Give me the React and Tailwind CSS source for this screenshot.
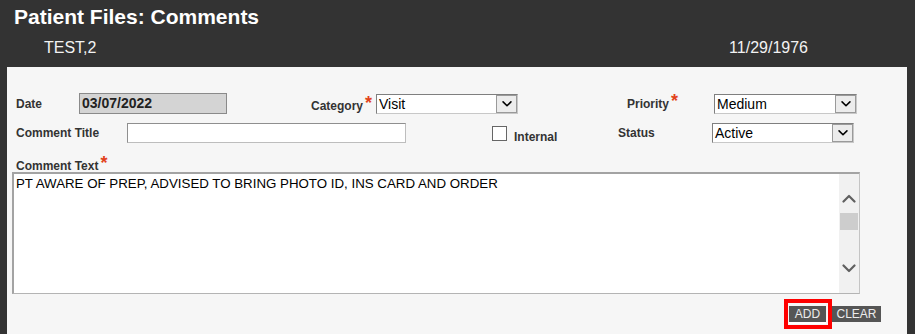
const Asterisk = () => <span className="text-[#e2421b] text-[18px] font-bold leading-[12px] relative top-[-1px] ml-[2px]">*</span>;

const Chevron = ({ up, className }) => (
    <svg viewBox="0 0 14 8" className={className} fill="none" stroke="currentColor" strokeWidth="2.2" strokeLinecap="round" strokeLinejoin="round">
        <path d={up ? 'M1.5 7 L7 1.5 L12.5 7' : 'M1.5 1 L7 6.5 L12.5 1'} />
    </svg>
);

const Select = ({ value, width }) => (
    <div className={`flex items-stretch h-[20px] bg-white border border-[#7f7f7f] border-r-[#c8c8c8] border-b-[#c8c8c8] ${width}`}>
        <span className="flex-1 pl-[2px] text-[14px] leading-[18px] text-black">{value}</span>
        <span className="w-[21px] flex items-center justify-center bg-[#ececec] border border-[#9a9a9a] text-black">
            <Chevron className="w-[10px] h-[6px]" />
        </span>
    </div>
);

const Label = ({ children, className = '' }) => (
    <span className={`text-[12px] font-bold text-[#333] leading-[14px] whitespace-nowrap ${className}`}>{children}</span>
);

const App = () => {
    return (
        <div className="min-h-screen bg-[#333333] font-['Liberation_Sans',Arial,sans-serif] overflow-hidden">
            {/* Header */}
            <div className="pl-[14px] pt-[5px] text-white text-[21px] font-bold leading-[24px]">Patient Files: Comments</div>
            <div className="flex justify-between pl-[44px] pr-[107px] mt-[10px] mb-[10px] text-[16px] leading-[18px] text-[#f2f2f2]">
                <span>TEST,2</span>
                <span>11/29/1976</span>
            </div>

            {/* Form panel */}
            <div className="ml-[7px] w-[900px] bg-[#f6f6f6] px-[5px] pt-[26px] pb-[20px]">
                <div className="flex items-center pl-[4px] h-[21px]">
                    <Label className="w-[63px]">Date</Label>
                    <div className="w-[148px] h-[21px] bg-[#d4d4d4] border border-[#8a8a8a] pl-[2px] text-[14px] font-bold leading-[19px] text-[#222]">03/07/2022</div>
                    <Label className="ml-[84px] w-[65px] pt-[3px]">Category<Asterisk /></Label>
                    <Select value="Visit" width="w-[142px]" />
                    <Label className="ml-[109px] w-[87px]">Priority<Asterisk /></Label>
                    <Select value="Medium" width="w-[143px]" />
                </div>

                <div className="flex items-center pl-[4px] mt-[9px] h-[20px]">
                    <Label className="w-[111px]">Comment Title</Label>
                    <div className="w-[279px] h-[20px] bg-white border border-[#8f8f8f] border-r-[#bdbdbd] border-b-[#bdbdbd]" />
                    <span className="ml-[86px] w-[15px] h-[15px] bg-white border border-[#666]" />
                    <Label className="ml-[7px] w-[104px] pt-[7px]">Internal</Label>
                    <Label className="w-[94px]">Status</Label>
                    <Select value="Active" width="w-[142px]" />
                </div>

                <div className="pl-[4px] mt-[10px] h-[19px]">
                    <Label>Comment Text<Asterisk /></Label>
                </div>

                <div className="flex w-[848px] h-[122px] bg-white border-2 border-[#a3a3a3] border-r border-b border-r-[#c4c4c4] border-b-[#b4b4b4]">
                    <div className="flex-1 pl-[2px] pt-[2px] text-[13.3px] leading-[16px] text-black">
                        PT AWARE OF PREP, ADVISED TO BRING PHOTO ID, INS CARD AND ORDER
                    </div>
                    <div className="w-[20px] bg-[#f1f1f1] flex flex-col items-center pt-[20px] pb-[20px] text-[#606060]">
                        <Chevron up className="w-[14px] h-[9px]" />
                        <div className="mt-[10px] w-[18px] h-[17px] bg-[#cdcdcd]" />
                        <div className="flex-1" />
                        <Chevron className="w-[14px] h-[9px]" />
                    </div>
                </div>

                <div className="flex items-start justify-end pr-[21px] mt-[5px]">
                    <div className="flex flex-col w-[48px] h-[30px] border-[4px] border-[#ff0000] pt-[3px] pl-[1px]">
                        <button className="flex items-center justify-center w-[37px] h-[18px] bg-[#555] border-b-2 border-white text-[#ececec] text-[12px] leading-[16px]">ADD</button>
                    </div>
                    <button className="flex items-center justify-center mt-[7px] w-[49px] h-[16px] bg-[#555] text-[#ececec] text-[12px] leading-[16px]">CLEAR</button>
                </div>
            </div>
        </div>
    );
};

export default App;
